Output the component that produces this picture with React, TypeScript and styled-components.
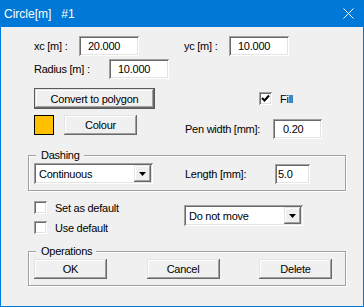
import React from "react";
import styled, { createGlobalStyle, css } from "styled-components";

const GlobalStyle = createGlobalStyle`
  html, body {
    margin: 0;
    padding: 0;
    background: #ffffff;
  }
  body {
    font-family: "Liberation Sans", Arial, sans-serif;
    font-size: 11px;
    letter-spacing: -0.25px;
    color: #000000;
  }
`;

// classic win32 3D edges
const sunken = css`
  background-color: #ffffff;
  box-shadow: inset 1px 1px 0 #a0a0a0, inset -1px -1px 0 #ffffff,
    inset 2px 2px 0 #696969, inset -2px -2px 0 #e3e3e3;
`;

const raised = css`
  background-color: #f0f0f0;
  box-shadow: inset -1px -1px 0 #696969, inset 1px 1px 0 #e3e3e3,
    inset -2px -2px 0 #a0a0a0, inset 2px 2px 0 #ffffff;
`;

const Window = styled.div`
  width: 364px;
  height: 307px;
  box-sizing: border-box;
  border: 1px solid #0078d7;
  border-top: none;
  background-color: #f0f0f0;
  display: flex;
  flex-direction: column;
`;

const TitleBar = styled.div`
  height: 27px;
  flex-shrink: 0;
  background-color: #0078d7;
  color: #ffffff;
  font-size: 12px;
  letter-spacing: 0;
  display: flex;
  align-items: center;
  padding-left: 3px;
  white-space: pre;
`;

const CloseIcon = styled.svg`
  margin-left: auto;
  margin-right: 9px;
`;

const Body = styled.div`
  padding: 9px 17px 0 27px;
`;

const Row = styled.div<{ $mt: number; $align?: string }>`
  display: flex;
  align-items: ${({ $align }) => $align || "center"};
  padding-left: 6px;
  margin-top: ${({ $mt }) => $mt}px;
`;

const Cell = styled.div<{ $w?: number; $mt?: number }>`
  display: flex;
  align-items: center;
  flex-shrink: 0;
  width: ${({ $w }) => ($w ? `${$w}px` : "auto")};
  margin-top: ${({ $mt }) => $mt || 0}px;
`;

const Label = styled.span<{ $w?: number; $indent?: number }>`
  width: ${({ $w }) => ($w ? `${$w}px` : "auto")};
  box-sizing: border-box;
  padding-left: ${({ $indent }) => $indent || 0}px;
  flex-shrink: 0;
  white-space: pre;
`;

const Field = styled.div<{ $w: number; $pad: number }>`
  ${sunken};
  width: ${({ $w }) => $w}px;
  height: 20px;
  box-sizing: border-box;
  padding-left: ${({ $pad }) => $pad}px;
  display: flex;
  align-items: center;
  flex-shrink: 0;
`;

const Button = styled.button<{ $w: number; $h?: number; $default?: boolean }>`
  ${raised};
  width: ${({ $w }) => $w}px;
  height: ${({ $h }) => $h || 20}px;
  box-sizing: border-box;
  border: ${({ $default }) => ($default ? "1px solid #5a5a5a" : "none")};
  padding: 0;
  margin: 0;
  font-family: inherit;
  font-size: 11px;
  letter-spacing: -0.25px;
  color: #000000;
  flex-shrink: 0;
`;

const Swatch = styled.div<{ $color: string }>`
  width: 20px;
  height: 20px;
  box-sizing: border-box;
  border: 1px solid #000000;
  background-color: ${({ $color }) => $color};
  margin-right: 10px;
  flex-shrink: 0;
`;

const CheckItem = styled.div`
  display: flex;
  align-items: center;
  gap: 8px;
  height: 13px;
`;

const CheckBox = styled.span`
  ${sunken};
  width: 13px;
  height: 13px;
  display: flex;
  align-items: center;
  justify-content: center;
  flex-shrink: 0;
`;

const CheckColumn = styled.div`
  display: flex;
  flex-direction: column;
  gap: 7px;
  width: 150px;
  flex-shrink: 0;
`;

const Select = styled.div<{ $w: number; $mt?: number }>`
  ${sunken};
  width: ${({ $w }) => $w}px;
  height: 21px;
  box-sizing: border-box;
  padding-left: 5px;
  display: flex;
  align-items: center;
  flex-shrink: 0;
  margin-top: ${({ $mt }) => $mt || 0}px;
`;

const DropButton = styled.span`
  ${raised};
  width: 17px;
  height: 17px;
  margin-left: auto;
  margin-right: 2px;
  display: flex;
  align-items: center;
  justify-content: center;
`;

const Group = styled.div<{ $mt: number }>`
  position: relative;
  margin-top: ${({ $mt }) => $mt}px;
  border: 1px solid #a0a0a0;
  box-shadow: 1px 1px 0 #ffffff, inset 1px 1px 0 #ffffff;
  padding: 7px 0 6px 0;
`;

const Legend = styled.span`
  position: absolute;
  top: -7px;
  left: 7px;
  line-height: 13px;
  padding: 0 4px 0 5px;
  background-color: #f0f0f0;
`;

const GroupRow = styled.div<{ $spread?: boolean }>`
  display: flex;
  align-items: center;
  padding-left: 5px;
  padding-right: ${({ $spread }) => ($spread ? 13 : 0)}px;
  justify-content: ${({ $spread }) => ($spread ? "space-between" : "flex-start")};
`;

const Check = () => (
  <svg width="9" height="9" viewBox="0 0 9 9">
    <path d="M1 4 L3.5 6.5 L8 1.5" stroke="#000" strokeWidth="2" fill="none" />
  </svg>
);

const Arrow = () => (
  <svg width="7" height="4" viewBox="0 0 7 4">
    <path d="M0 0 H7 L3.5 4 Z" fill="#000" />
  </svg>
);

const Checkbox: React.FC<{ label: string; checked?: boolean }> = ({ label, checked }) => (
  <CheckItem>
    <CheckBox>{checked && <Check />}</CheckBox>
    <span>{label}</span>
  </CheckItem>
);

const Dropdown: React.FC<{ value: string; w: number; mt?: number }> = ({ value, w, mt }) => (
  <Select $w={w} $mt={mt}>
    <span>{value}</span>
    <DropButton>
      <Arrow />
    </DropButton>
  </Select>
);

const App: React.FC = () => {
  return (
    <>
      <GlobalStyle />
      <Window>
        <TitleBar>
          <span>{"Circle[m]   #1"}</span>
          <CloseIcon width="11" height="11" viewBox="0 0 11 11">
            <path d="M0.5 0.5 L10.5 10.5 M10.5 0.5 L0.5 10.5" stroke="#fff" strokeWidth="1" />
          </CloseIcon>
        </TitleBar>
        <Body>
          <Row $mt={0}>
            <Cell $w={150}>
              <Label $w={45}>xc [m] :</Label>
              <Field $w={60} $pad={9}>20.000</Field>
            </Cell>
            <Cell>
              <Label $w={45}>yc [m] :</Label>
              <Field $w={60} $pad={9}>10.000</Field>
            </Cell>
          </Row>
          <Row $mt={3}>
            <Label $w={75}>Radius [m] :</Label>
            <Field $w={60} $pad={9}>10.000</Field>
          </Row>
          <Row $mt={9}>
            <Cell $w={225}>
              <Button $w={121} $h={21} $default>
                Convert to polygon
              </Button>
            </Cell>
            <Checkbox label="Fill" checked />
          </Row>
          <Row $mt={6} $align="flex-start">
            <Cell $w={150}>
              <Swatch $color="#ffc000" />
              <Button $w={73}>Colour</Button>
            </Cell>
            <Cell $mt={4}>
              <Label $w={89} $indent={1}>Pen width [mm]:</Label>
              <Field $w={49} $pad={10}>0.20</Field>
            </Cell>
          </Row>
          <Group $mt={16}>
            <Legend>Dashing</Legend>
            <GroupRow>
              <Cell $w={150}>
                <Dropdown value="Continuous" w={119} />
              </Cell>
              <Label $w={91} $indent={1}>Length [mm]:</Label>
              <Field $w={35} $pad={3}>5.0</Field>
            </GroupRow>
          </Group>
          <Row $mt={10} $align="flex-start">
            <CheckColumn>
              <Checkbox label="Set as default" />
              <Checkbox label="Use default" />
            </CheckColumn>
            <Dropdown value="Do not move" w={119} mt={4} />
          </Row>
          <Group $mt={17}>
            <Legend>Operations</Legend>
            <GroupRow $spread>
              <Button $w={73}>OK</Button>
              <Button $w={73}>Cancel</Button>
              <Button $w={73}>Delete</Button>
            </GroupRow>
          </Group>
        </Body>
      </Window>
    </>
  );
};

export default App;
